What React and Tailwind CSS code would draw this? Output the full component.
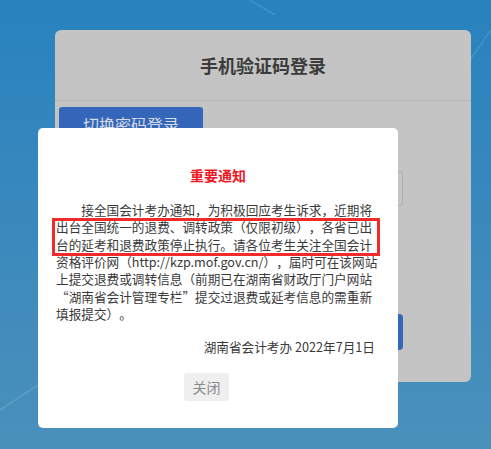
import { useState } from 'react'

const cjk = '"Noto Sans CJK SC", "Liberation Sans", sans-serif'

const LINES = [
  '出台全国统一的退费、调转政策（仅限初级），各省已出',
  '台的延考和退费政策停止执行。请各位考生关注全国会计',
  '资格评价网（http://kzp.mof.gov.cn/），届时可在该网站',
  '上提交退费或调转信息（前期已在湖南省财政厅门户网站',
  '“湖南省会计管理专栏”提交过退费或延考信息的需重新',
  '填报提交）。',
]

/// Dimmed login card behind the notice.
function LoginCard() {
  return (
    <div className="ml-[55px] mt-[30px] h-[352px] w-[416px] rounded-[6px] bg-[#c4c4c4]">
      <div className="flex h-[71px] items-center justify-center border-b border-dotted border-[#ababab]">
        <h1 className="text-[18px] font-bold text-[#3b3b3b]">手机验证码登录</h1>
      </div>
      <div className="px-1 pt-[6px]">
        <button className="h-[34px] w-[144px] rounded-[3px] bg-[#3467b9] text-[16px] text-[#d7dbe4]">
          切换密码登录
        </button>
      </div>
      <div className="ml-[24px] mt-[30px] flex w-[324px] flex-col">
        <div className="h-[35px] rounded-[3px] border border-[#b0b0b0]" />
        <div className="mt-[108px] h-[36px] rounded-[4px] bg-[#3467b9]" />
      </div>
    </div>
  )
}

function Notice({ onClose }) {
  return (
    <div className="absolute left-[38px] top-[128px] h-[300px] w-[360px] rounded-[5px] bg-white">
      <h2 className="pt-[37px] text-center text-[14px] font-bold leading-[20px] text-[#f0141e]">重要通知</h2>
      <div className="ml-[18px] mt-[16px] whitespace-nowrap text-[12.65px] leading-[17.33px] text-[#3a3a3a] [text-spacing-trim:space-all]">
        <div className="pl-[2em]">接全国会计考办通知，为积极回应考生诉求，近期将</div>
        {LINES.map((l) => <div key={l}>{l}</div>)}
      </div>
      <p className="mr-[23px] mt-[16px] text-right text-[12.65px] leading-[17px] text-[#3a3a3a]">
        湖南省会计考办 2022年7月1日
      </p>
      <div className="ml-[146px] mt-[18px] flex">
        <button onClick={onClose}
          className="h-[28px] w-[45px] rounded-[3px] bg-[#efefef] text-[14px] text-[#8a8a8a]">关闭</button>
      </div>
      {/* annotation frame */}
      <div className="pointer-events-none absolute left-[14px] top-[90px] h-[38px] w-[328px] border-[3px] border-[#f32a2a]" />
    </div>
  )
}

export default function App() {
  const [open, setOpen] = useState(true)
  return (
    <div className="relative h-[449px] w-full overflow-hidden bg-gradient-to-b from-[#2782be] to-[#4a90bb]"
      style={{ fontFamily: cjk }}>
      <svg className="pointer-events-none absolute inset-0" width="491" height="449">
        <line x1="250" y1="0" x2="275" y2="15" stroke="#ffffff" strokeOpacity="0.12" strokeWidth="1.5" />
        <line x1="491" y1="30" x2="470" y2="60" stroke="#ffffff" strokeOpacity="0.12" strokeWidth="1.5" />
        <line x1="0" y1="410" x2="38" y2="385" stroke="#ffffff" strokeOpacity="0.12" strokeWidth="1.5" />
      </svg>
      <LoginCard />
      {open && <Notice onClose={() => setOpen(false)} />}
    </div>
  )
}
